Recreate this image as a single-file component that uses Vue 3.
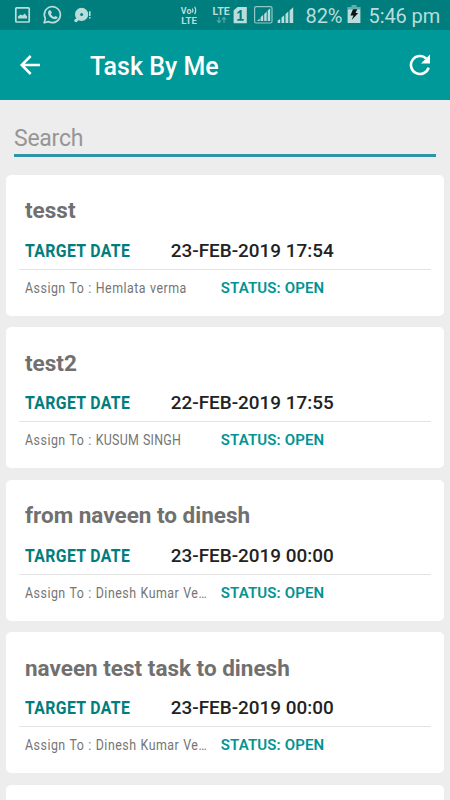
<script setup>
const tasks = [
  { id: 1, title: 'tesst', date: '23-FEB-2019 17:54', assignee: 'Hemlata verma' },
  { id: 2, title: 'test2', date: '22-FEB-2019 17:55', assignee: 'KUSUM SINGH' },
  { id: 3, title: 'from naveen to dinesh', date: '23-FEB-2019 00:00', assignee: 'Dinesh Kumar Ve…' },
  { id: 4, title: 'naveen test task to dinesh', date: '23-FEB-2019 00:00', assignee: 'Dinesh Kumar Ve…' },
]
const isCaps = (name) => name === name.toUpperCase()
</script>

<template>
  <div class="screen">
    <div class="status">
      <svg class="notifications" width="100" height="30" viewBox="0 0 100 30" fill="none">
        <rect x="15.8" y="7.8" width="13.4" height="14.2" rx=".8" stroke="#b8dddb" stroke-width="1.7" />
        <path d="M18 18.500v-2l2.500-2 2 1 2.200-2 2.400 3v2z" fill="#b8dddb" />
        <path d="M44.200 22.800l1.200-4.200a8 8 0 1 1 3 3z" stroke="#b8dddb" stroke-width="1.700" stroke-linejoin="round" />
        <path d="M49.500 10.200l1.400.2 1 2.400-1 1.300c.7 1.400 1.800 2.400 3.200 3l1.300-1.200 2.200 1.100c.2 1.300-1.300 2.300-2.600 2.300-3.700-.4-7-3.700-7-6.800 0-1 .6-2 1.500-2.300z" fill="#b8dddb" />
        <circle cx="81.600" cy="14.400" r="6.600" fill="#b8dddb" />
        <circle cx="81.600" cy="14.400" r="1.500" fill="#098080" />
        <path d="M77 17l2 3-1.500 1h-2.500z" fill="#b8dddb" />
        <circle cx="76" cy="20.500" r="1.700" fill="#b8dddb" />
        <path d="M89.800 11.200v4.900M89.800 17.100v1.500" stroke="#b8dddb" stroke-width="1.600" />
      </svg>
      <svg class="network" width="126" height="30" viewBox="176 0 126 30" fill="#b8dddb" font-family="Roboto, sans-serif" font-weight="700">
        <text x="180.800" y="13.600" font-size="8.300" textLength="10.600" lengthAdjust="spacingAndGlyphs">Vo</text>
        <path d="M192.300 8.500q1.300 2 0 4M194.600 6.800q2.200 3.700 0 7.300" fill="none" stroke="#b8dddb" stroke-width="1.200" />
        <text x="181.300" y="23.800" font-size="8.800" textLength="15.500" lengthAdjust="spacingAndGlyphs">LTE</text>
        <text x="212.600" y="14.600" font-size="10" textLength="17" lengthAdjust="spacingAndGlyphs">LTE</text>
        <g fill="none" stroke="#58aaa8" stroke-width="1.200">
          <path d="M219 17v5.500M217 20.400l2 2.200 2-2.200M224 23v-5.500M222 19.600l2-2.200 2 2.200" />
        </g>
        <path d="M237.500 7h9.300v16.300h-13.200V10.500z" />
        <path d="M237.300 12.400l2.800-2.300h1.600v9h2v1.600h-6.300v-1.600h2.200v-6.300l-2.300 1z" fill="#007d7d" />
        <rect x="254.600" y="6.600" width="17.400" height="16.400" rx="1.500" fill="none" stroke="#8fc8c6" stroke-width="1.200" />
        <path d="M257 20.900h2.700v-2.400zM260.600 20.900v-3.700l2.600-2.400v6.100zM264.200 20.900v-7l2.500-2.400v9.400zM267.700 20.900V10.500l2.500-2.300v12.700z" />
        <path d="M277.700 23v-2.500l2.500-1.500v4zM281.500 23v-5.500l2.700-2.300V23zM285.500 23v-9l2.800-2.500V23zM289.600 23V10.500l3.600-3.200V23z" />
      </svg>
      <span class="battery-text">82%</span>
      <svg class="battery" width="14" height="20" viewBox="0 0 14 20">
        <path d="M4.500 1h5v2.100h3.900v16H.6v-16h3.900z" fill="#b8dddb" />
        <path d="M.6 1h12.800v4.500H.6z" fill="#007d7d" opacity=".48" />
        <path d="M6 5.200h4.300L8.500 9h2.700l-6.500 7.100 1.800-4.500H3.400z" fill="#081515" />
      </svg>
      <span class="clock">5:46 pm</span>
    </div>

    <header class="toolbar">
      <svg class="back" width="22" height="22" viewBox="0 0 22 22" fill="none" stroke="#fff" stroke-width="2.500">
        <path d="M21 11H3M11.700 2L2.700 11l9 9" />
      </svg>
      <h1>Task By Me</h1>
      <svg class="refresh" width="22" height="22" viewBox="0 0 22 22">
        <path d="M17.200 4.500A9 9 0 1 0 19.600 13.600" fill="none" stroke="#fff" stroke-width="2.600" />
        <path d="M21 .5v9h-9z" fill="#fff" />
      </svg>
    </header>

    <main>
      <div class="search"><span>Search</span></div>
      <div class="list">
        <article v-for="task in tasks" :key="task.id" class="card">
          <h2>{{ task.title }}</h2>
          <div class="target">
            <div class="label"><span>TARGET DATE</span></div>
            <div class="date">{{ task.date }}</div>
          </div>
          <div class="meta">
            <div class="assign"><span :class="{ caps: isCaps(task.assignee) }">Assign To : <b>{{ task.assignee }}</b></span></div>
            <div class="state">STATUS: OPEN</div>
          </div>
        </article>
        <article class="card"></article>
      </div>
    </main>
  </div>
</template>

<style>
body { margin: 0; overflow: hidden; }
</style>
<style scoped>
.screen { width: 450px; height: 800px; overflow: hidden; background: #ededed; font-family: Roboto, sans-serif; }
.status { height: 30px; background: #007d7d; display: flex; align-items: flex-start; color: #b8dddb; }
svg { display: block; flex: none; }
.network { margin-left: 76px; }
.battery-text { width: 42px; margin-left: 3.500px; font-size: 20px; line-height: 32px; letter-spacing: -.1px; }
.battery { margin: 4px 0 0 -1px; }
.clock { margin-left: 8px; font-size: 20px; line-height: 32px; white-space: nowrap; letter-spacing: -.1px; }
.toolbar { height: 70px; background: #009999; display: flex; align-items: center; color: #fff; box-sizing: border-box; padding: 0 19px; }
.back { margin-top: -1px; }
.toolbar h1 { margin: 4px 0 0 49px; font-size: 25px; line-height: 30px; font-weight: 500; flex: 1; }
.refresh { margin: -1px 0 0 0; }
.search { margin: 21px 14px 0; height: 33px; border-bottom: 3px solid #3093a8; font-size: 23px; line-height: 36px; color: #969696; letter-spacing: -.25px; }
.list { margin: 17.800px 6px 0; display: flex; flex-direction: column; gap: 11.500px; }
.card { height: 141px; flex: none; background: #fff; border-radius: 5px; box-sizing: border-box; padding: 19.400px 13px 0; }
.card span { display: inline-block; white-space: nowrap; transform-origin: 0 50%; }
h2 { margin: 0 6px; height: 32.600px; font-size: 22.500px; line-height: 32px; font-weight: 700; color: #707070; }
.target { height: 43px; display: flex; align-items: center; border-bottom: 1px solid #e4e4e4; padding-left: 6px; line-height: 36px; box-sizing: border-box; padding-top: 6.200px; }
.label { width: 145.800px; color: #007d7d; font-size: 19px; font-weight: 700; }
.label span { transform: scaleX(.83); letter-spacing: .45px; }
.date { color: #222; font-size: 18.900px; font-weight: 500; }
.meta { display: flex; padding-left: 6px; line-height: 36.400px; }
.assign { width: 195.800px; font-size: 15.500px; color: #757575; font-weight: 400; }
.assign span { transform: scaleX(.8); letter-spacing: .62px; word-spacing: .5px; }
.assign b { font-weight: inherit; }
.assign .caps b { letter-spacing: .35px; }
.state { font-size: 15px; font-weight: 600; color: #009494; letter-spacing: .14px; }
</style>
